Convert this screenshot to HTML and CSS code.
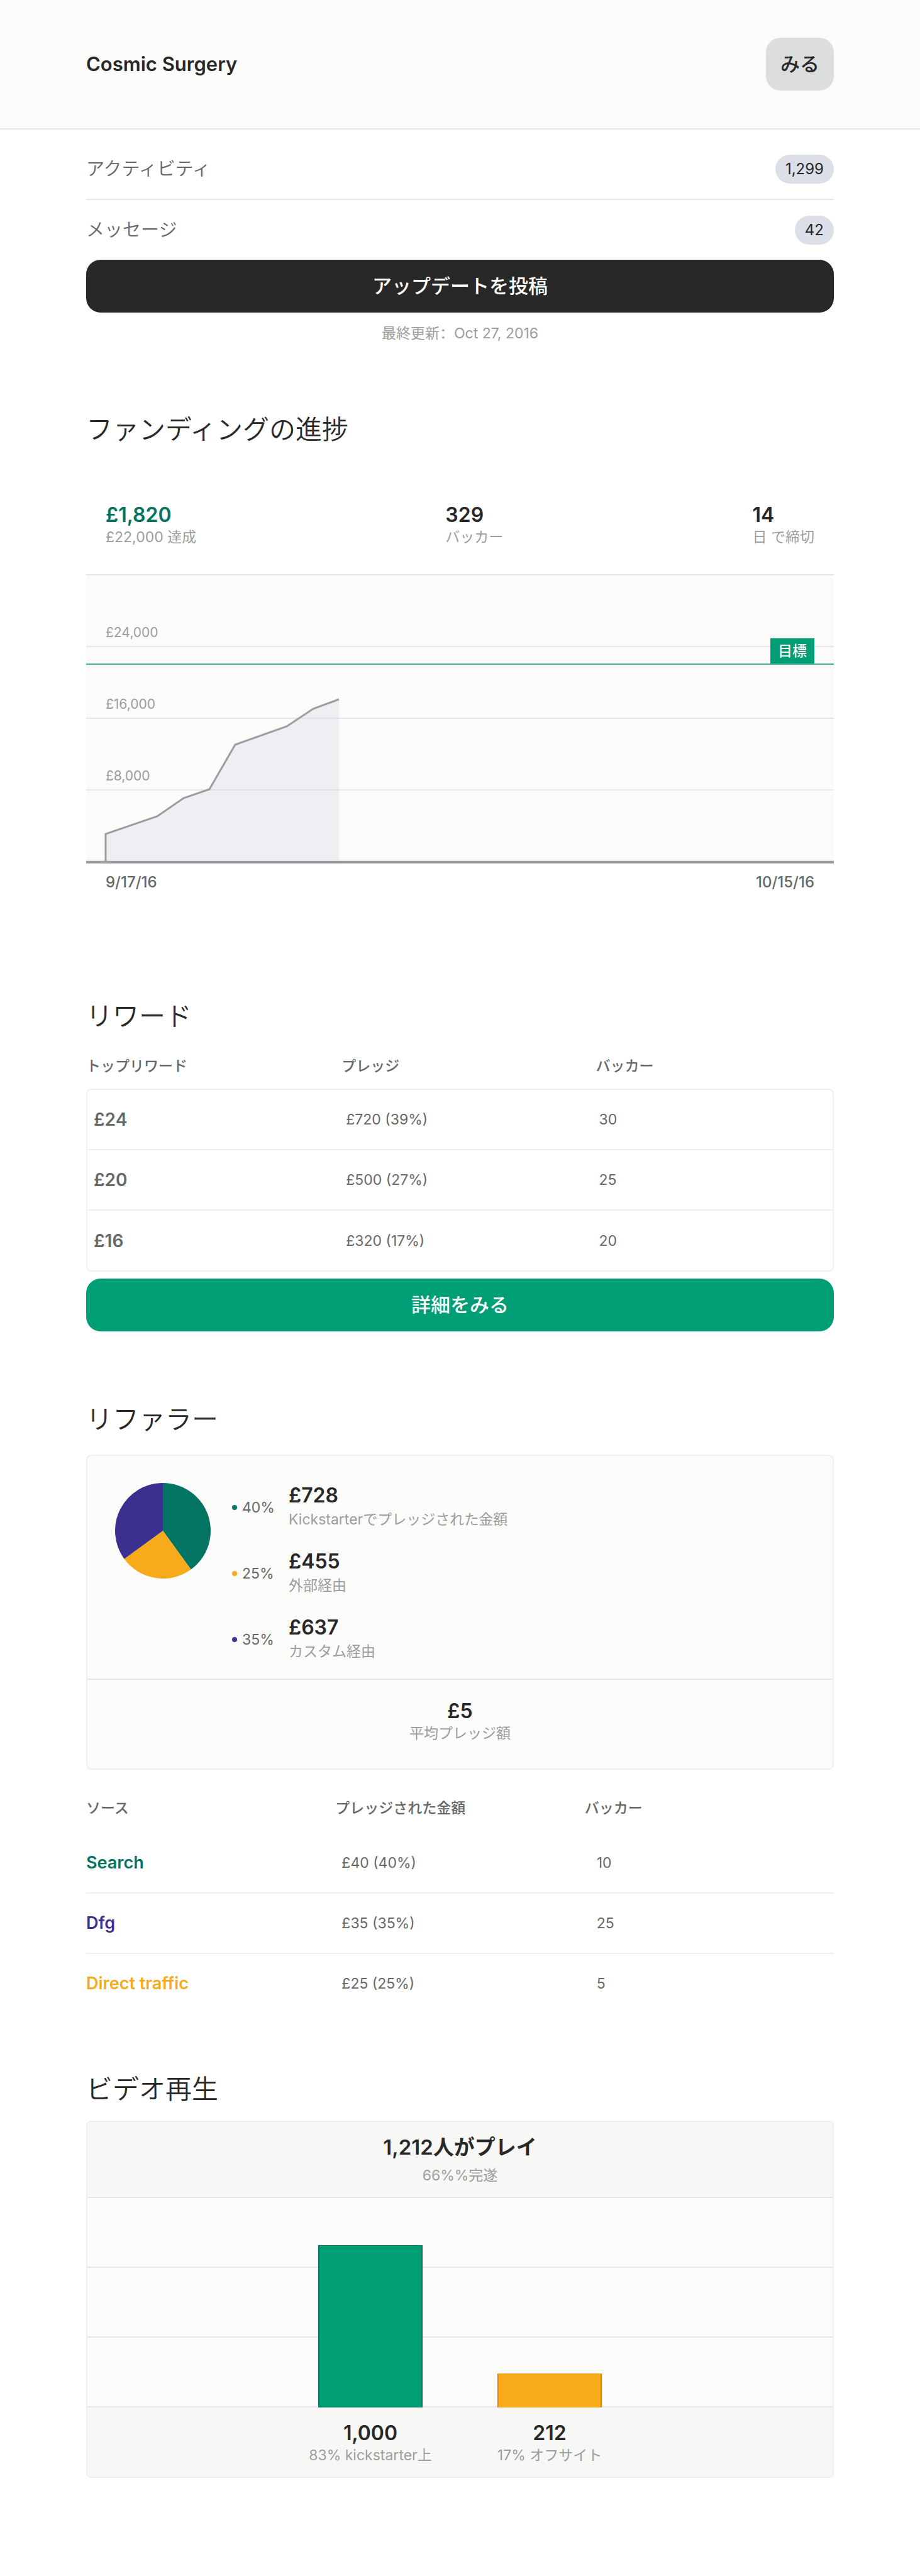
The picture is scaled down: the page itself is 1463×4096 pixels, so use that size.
FILE: index.html
```html
<!DOCTYPE html>
<html lang="ja">
<head>
<meta charset="utf-8">
<meta name="viewport" content="width=device-width, initial-scale=1">
<title>Cosmic Surgery</title>
<link rel="stylesheet" href="styles.css">
</head>
<body>
<header class="header">
  <h1 class="project-name">Cosmic Surgery</h1>
  <button class="button button-view" type="button">みる</button>
</header>
<main class="content">
  <section class="summary">
    <a class="summary-row" href="#activity"><span>アクティビティ</span><span class="badge">1,299</span></a>
    <a class="summary-row" href="#messages"><span>メッセージ</span><span class="badge">42</span></a>
    <button class="button button-dark" type="button">アップデートを投稿</button>
    <p class="updated">最終更新<span class="colon" lang="zh-CN">：</span>Oct 27, 2016</p>
  </section>

  <section class="funding">
    <h2 class="heading">ファンディングの進捗</h2>
    <div class="stats">
      <div><p class="figure figure-green">£1,820</p><p class="caption">£22,000 達成</p></div>
      <div><p class="figure">329</p><p class="caption">バッカー</p></div>
      <div><p class="figure">14</p><p class="caption">日 で締切</p></div>
    </div>
    <div class="chart">
      <div class="chart-band"></div>
      <div class="chart-band"></div>
      <div class="chart-band"></div>
      <div class="chart-band chart-band-last"></div>
      <svg class="chart-line" viewBox="0 0 1189 456" preserveAspectRatio="none" aria-hidden="true">
        <path class="area" d="M31 456V413L113 385L155 356L196 342L237 271L319 242L361 214L402 199V456Z"/>
        <path class="line" d="M31 456V413L113 385L155 356L196 342L237 271L319 242L361 214L402 199"/>
      </svg>
      <div class="chart-labels"><span>£24,000</span><span>£16,000</span><span>£8,000</span></div>
      <div class="goal"><span class="goal-tag">目標</span></div>
    </div>
    <div class="dates"><span>9/17/16</span><span>10/15/16</span></div>
  </section>

  <section class="rewards">
    <h2 class="heading">リワード</h2>
    <table class="table rewards-table">
      <thead><tr><th>トップリワード</th><th>プレッジ</th><th>バッカー</th></tr></thead>
      <tbody>
        <tr><td>£24</td><td>£720 (39%)</td><td>30</td></tr>
        <tr><td>£20</td><td>£500 (27%)</td><td>25</td></tr>
        <tr><td>£16</td><td>£320 (17%)</td><td>20</td></tr>
      </tbody>
    </table>
    <button class="button button-green" type="button">詳細をみる</button>
  </section>

  <section class="referrers">
    <h2 class="heading">リファラー</h2>
    <div class="panel">
      <div class="breakdown">
        <svg class="pie" viewBox="-50 -50 100 100" aria-hidden="true">
          <path fill="#037362" d="M0 0V-50A50 50 0 0 1 29.389 40.451Z"/>
          <path fill="#f8ab1a" d="M0 0L29.389 40.451A50 50 0 0 1 -40.451 29.389Z"/>
          <path fill="#3b308f" d="M0 0L-40.451 29.389A50 50 0 0 1 0 -50Z"/>
        </svg>
        <ul class="shares">
          <li class="share share-green"><span class="percent">40%</span><div class="amount"><p class="figure">£728</p><p class="caption">Kickstarterでプレッジされた金額</p></div></li>
          <li class="share share-yellow"><span class="percent">25%</span><div class="amount"><p class="figure">£455</p><p class="caption">外部経由</p></div></li>
          <li class="share share-purple"><span class="percent">35%</span><div class="amount"><p class="figure">£637</p><p class="caption">カスタム経由</p></div></li>
        </ul>
      </div>
      <div class="average"><p class="figure">£5</p><p class="caption">平均プレッジ額</p></div>
    </div>
    <table class="table sources-table">
      <thead><tr><th>ソース</th><th>プレッジされた金額</th><th>バッカー</th></tr></thead>
      <tbody>
        <tr><td class="source-green">Search</td><td>£40 (40%)</td><td>10</td></tr>
        <tr><td class="source-purple">Dfg</td><td>£35 (35%)</td><td>25</td></tr>
        <tr><td class="source-yellow">Direct traffic</td><td>£25 (25%)</td><td>5</td></tr>
      </tbody>
    </table>
  </section>

  <section class="video">
    <h2 class="heading">ビデオ再生</h2>
    <div class="panel">
      <div class="plays"><p class="figure figure-large">1,212人がプレイ</p><p class="caption">66%%完遂</p></div>
      <div class="bars">
        <div class="bar bar-green" style="height:258px"></div>
        <div class="bar bar-yellow" style="height:54px"></div>
      </div>
      <div class="bar-labels">
        <div class="bar-label"><p class="figure">1,000</p><p class="caption">83% kickstarter上</p></div>
        <div class="bar-label"><p class="figure">212</p><p class="caption">17% オフサイト</p></div>
      </div>
    </div>
  </section>
</main>
</body>
</html>
```
FILE: styles.css
```css
* { box-sizing: border-box; }
body {
  margin: 0;
  background: #fff;
  color: #282828;
  font-family: Inter, "Noto Sans CJK JP", sans-serif;
  font-size: 23px;
  line-height: 34px;
}
h1, h2, p, ul { margin: 0; padding: 0; }
ul { list-style: none; }

.header {
  display: flex;
  justify-content: space-between;
  align-items: center;
  padding: 60px 137px;
  background: #fbfbfa;
  border-bottom: 2px solid #e6e7e7;
}
.project-name { font-size: 31px; line-height: 40px; font-weight: 600; }

.button {
  display: block;
  height: 84px;
  padding: 0 23px;
  border: 0;
  border-radius: 23px;
  font: 500 31px/40px Inter, "Noto Sans CJK JP", sans-serif;
  color: #fff;
  cursor: pointer;
}
.button-view { background: #dcdedd; color: #282828; }
.button-dark { width: 100%; background: #282828; }
.button-green { width: 100%; background: #009e74; margin-top: 11px; }

.content { padding: 15px 137px 156px; }

.summary-row {
  display: flex;
  justify-content: space-between;
  align-items: center;
  height: 97px;
  border-bottom: 2px solid #e6e7e7;
  color: #656868;
  font-size: 29px;
  font-weight: 350;
  text-decoration: none;
}
.summary-row + .summary-row { height: 95px; border-bottom: 0; }
.badge {
  padding: 6px 16px;
  border-radius: 23px;
  background: #dcdee8;
  color: #282828;
  font-size: 24px;
  font-weight: 400;
}
.updated { margin-top: 16px; text-align: center; color: #9b9e9e; }
.colon { font-family: "Noto Sans CJK SC", sans-serif; line-height: 20px; }

.heading { font-size: 42px; line-height: 60px; font-weight: 350; }
.figure { font-size: 32px; line-height: 36px; font-weight: 600; }
.figure-green { color: #037362; }
.figure-large { font-size: 33px; }
.caption { color: #9b9e9e; }

.funding { margin-top: 106px; }
.stats {
  display: flex;
  justify-content: space-between;
  padding: 88px 31px 42px;
}
.chart {
  position: relative;
  background: #fbfbfa;
  border-bottom: 4px solid #9b9e9e;
}
.chart-band { height: 114px; border-top: 2px solid #e6e7e7; }
.chart-band-last { border-bottom: 2px solid #e6e7e7; }
.chart-line { position: absolute; left: 0; top: 0; width: 100%; height: 100%; }
.area { fill: #dcdee8; fill-opacity: .4; }
.line { fill: none; stroke: #9b9e9e; stroke-width: 3; vector-effect: non-scaling-stroke; }
.chart-labels {
  position: absolute;
  left: 31px;
  top: 79px;
  display: flex;
  flex-direction: column;
  gap: 86px;
  line-height: 28px;
  font-size: 21px;
  color: #9b9e9e;
}
.goal {
  position: absolute;
  left: 0;
  right: 0;
  bottom: 312px;
  display: flex;
  justify-content: flex-end;
  padding-right: 31px;
  border-bottom: 2px solid #40b697;
}
.goal-tag {
  height: 40px;
  padding: 0 12px;
  background: #009e74;
  color: #fff;
  line-height: 40px;
  font-weight: 500;
}
.dates {
  display: flex;
  justify-content: space-between;
  padding: 15px 31px 0;
  line-height: 30px;
  font-size: 24px;
  font-weight: 500;
  color: #656868;
}

.rewards { margin-top: 168px; }
.table {
  width: 100%;
  border-collapse: separate;
  border-spacing: 0;
  table-layout: fixed;
  color: #656868;
}
.table th { padding: 0; text-align: left; font-weight: 500; }
.table td { height: 96px; padding: 0; border-bottom: 2px solid #eeeff2; }
.table td:first-child { font-weight: 600; }

.rewards-table { margin-top: 32px; }
.rewards-table th { width: 34%; padding-bottom: 19px; }
.rewards-table th + th { padding-left: 2px; }
.rewards-table th:last-child { width: 32%; }
.rewards-table td:first-child { padding-left: 10px; font-size: 28px; border-left: 2px solid #eeeff2; }
.rewards-table td:nth-child(2) { padding-left: 9px; }
.rewards-table td:last-child { padding-left: 7px; border-right: 2px solid #eeeff2; }
.rewards-table tbody tr:first-child td { height: 98px; border-top: 2px solid #eeeff2; }
.rewards-table tbody tr:first-child td:first-child { border-top-left-radius: 8px; }
.rewards-table tbody tr:first-child td:last-child { border-top-right-radius: 8px; }
.rewards-table tbody tr:last-child td { height: 97px; }
.rewards-table tbody tr:last-child td:first-child { border-bottom-left-radius: 8px; }
.rewards-table tbody tr:last-child td:last-child { border-bottom-right-radius: 8px; }

.referrers { margin-top: 110px; }
.panel {
  border: 2px solid #eeeff2;
  border-radius: 8px;
  background: #fbfbfa;
  overflow: hidden;
}
.referrers .panel { margin-top: 26px; }
.breakdown {
  display: flex;
  gap: 34px;
  padding: 43px 44px 26px;
  border-bottom: 2px solid #e6e7e7;
}
.pie { width: 152px; height: 152px; flex: none; }
.shares { display: flex; flex-direction: column; gap: 32px; padding-top: 2px; }
.share { display: flex; align-items: center; }
.percent {
  display: flex;
  align-items: center;
  gap: 8px;
  width: 90px;
  color: #656868;
}
.percent::before { content: ""; width: 8px; height: 8px; border-radius: 50%; background: currentColor; }
.share-green .percent::before { background: #037362; }
.share-yellow .percent::before { background: #f8ab1a; }
.share-purple .percent::before { background: #3b308f; }
.amount { display: flex; flex-direction: column; gap: 3px; }
.average { padding: 32px 0 39px; text-align: center; }

.sources-table { margin-top: 44px; }
.sources-table th { padding-bottom: 23px; }
.sources-table td:first-child { font-size: 27px; }
.sources-table td:nth-child(2) { padding-left: 10px; }
.sources-table td:last-child { padding-left: 19px; }
.sources-table tbody tr:last-child td { border-bottom: 0; height: 94px; }
.sources-table .source-green { color: #037362; }
.sources-table .source-purple { color: #3b308f; }
.sources-table .source-yellow { color: #f8ab1a; }

.video { margin-top: 91px; }
.video .panel { margin-top: 20px; background: #f7f8f6; }
.plays {
  display: flex;
  flex-direction: column;
  gap: 10px;
  padding: 22px 0 17px;
  text-align: center;
}
.bars {
  display: flex;
  justify-content: center;
  align-items: flex-end;
  gap: 119px;
  height: 335px;
  background: repeating-linear-gradient(#e6e7e7 0 2px, #fbfbfa 2px 111px);
}
.bar { width: 166px; border-style: solid; border-width: 1px 2px; }
.bar-green { background: #009e74; border-color: #037362; }
.bar-yellow { background: #f8ab1a; border-color: #f09a14 #e38014; }
.bar-labels {
  display: flex;
  justify-content: center;
  gap: 85px;
  padding: 23px 0 17px;
}
.bar-label { width: 200px; text-align: center; white-space: nowrap; }
```
